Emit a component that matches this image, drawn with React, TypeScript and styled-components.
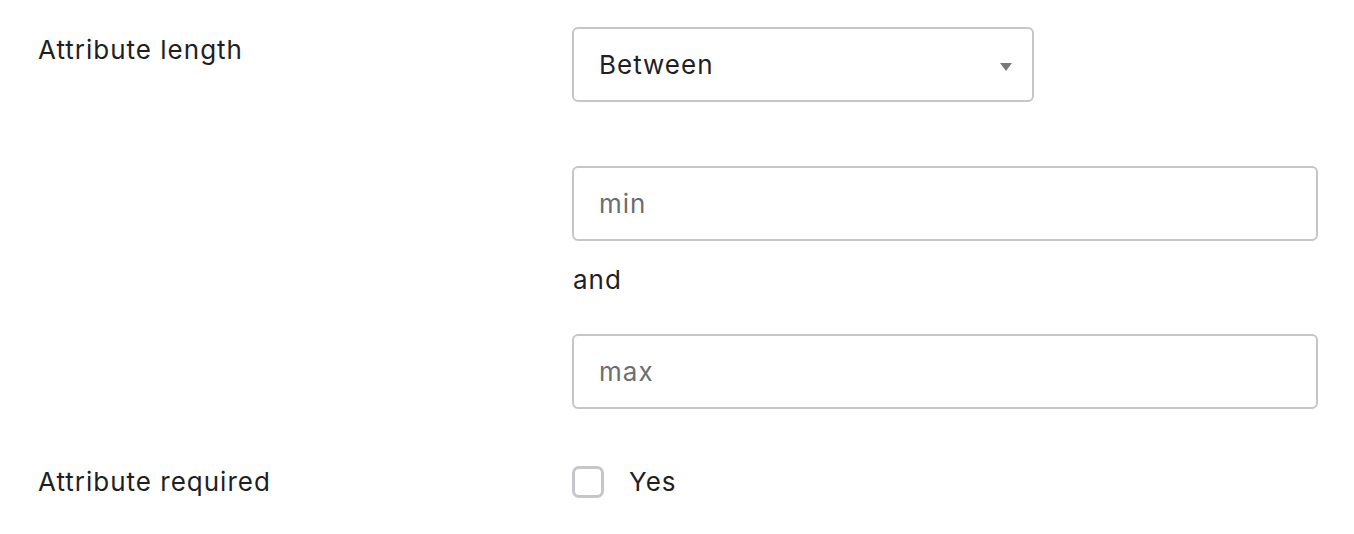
import React from 'react';
import styled, { createGlobalStyle } from 'styled-components';

const GlobalStyle = createGlobalStyle`
    body {
        margin: 0;
        background: #ffffff;
        font-family: Inter, "Noto Sans", sans-serif;
        color: #1f1f23;
    }
`;

const Form = styled.div`
    display: grid;
    grid-template-columns: 534px 746px;
    row-gap: 57px;
    padding: 27px 0 0 38px;
`;

const Label = styled.div<{ $top: number }>`
    font-size: 26px;
    letter-spacing: 1px;
    line-height: 32px;
    padding-top: ${(p) => p.$top}px;
    color: #1f1f23;
`;

const Stack = styled.div`
    display: flex;
    flex-direction: column;
`;

const SelectBox = styled.div`
    width: 462px;
    height: 75px;
    box-sizing: border-box;
    border: 2px solid #c5c5ca;
    border-radius: 6px;
    display: flex;
    align-items: center;
    padding: 0 26px 0 25px;
    font-size: 26px;
    letter-spacing: 1px;
    margin-bottom: 64px;
`;

const Caret = styled.span`
    margin-left: auto;
    width: 0;
    height: 0;
    border-left: 6px solid transparent;
    border-right: 6px solid transparent;
    border-top: 8px solid #7a7a7e;
    margin-right: -6px;
    margin-top: 4px;
`;

const Input = styled.input`
    width: 746px;
    height: 75px;
    box-sizing: border-box;
    border: 2px solid #c5c5ca;
    border-radius: 6px;
    padding: 0 25px;
    font-family: Inter, "Noto Sans", sans-serif;
    font-size: 26px;
    letter-spacing: 1px;
    color: #1f1f23;
    outline: none;

    &::placeholder {
        color: #6d6d72;
    }
`;

const And = styled.div`
    font-size: 26px;
    letter-spacing: 1px;
    line-height: 32px;
    margin: 23px 0 38px 1px;
`;

const CheckRow = styled.label`
    display: flex;
    align-items: center;
    gap: 25px;
    font-size: 26px;
    letter-spacing: 1px;
    line-height: 32px;
`;

const Box = styled.span`
    width: 32px;
    height: 32px;
    box-sizing: border-box;
    border: 3px solid #c5c5ca;
    border-radius: 7px;
    background: #fff;
`;

const App = () => {
    return (
        <>
            <GlobalStyle />
            <Form>
                <Label $top={7}>Attribute length</Label>
                <Stack>
                    <SelectBox>
                        Between
                        <Caret />
                    </SelectBox>
                    <Input placeholder='min' />
                    <And>and</And>
                    <Input placeholder='max' />
                </Stack>
                <Label $top={0}>Attribute required</Label>
                <CheckRow>
                    <Box />
                    Yes
                </CheckRow>
            </Form>
        </>
    );
};

export default App;
